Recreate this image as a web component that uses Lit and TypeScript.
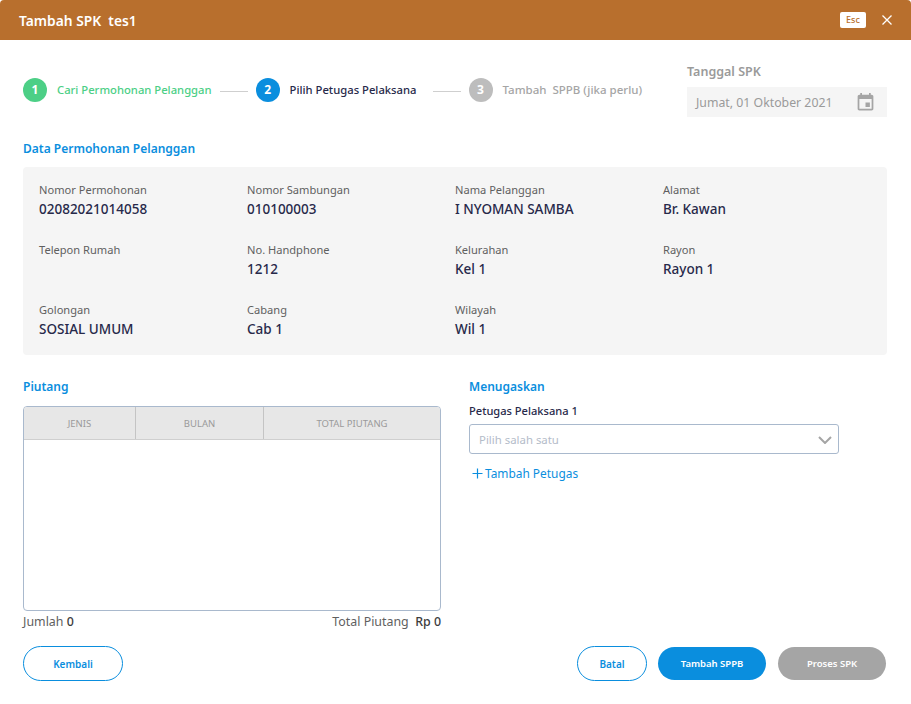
import { LitElement, css, html } from 'lit';
import { customElement } from 'lit/decorators.js';

const fields = [
  ['Nomor Permohonan', '02082021014058'],
  ['Nomor Sambungan', '010100003'],
  ['Nama Pelanggan', 'I NYOMAN SAMBA'],
  ['Alamat', 'Br. Kawan'],
  ['Telepon Rumah', ''],
  ['No. Handphone', '1212'],
  ['Kelurahan', 'Kel 1'],
  ['Rayon', 'Rayon 1'],
  ['Golongan', 'SOSIAL UMUM'],
  ['Cabang', 'Cab 1'],
  ['Wilayah', 'Wil 1'],
];

@customElement('app-root')
export class AppRoot extends LitElement {
  static styles = css`
    :host {
      display: block;
      width: 911px;
      height: 704px;
      overflow: hidden;
      background: #fff;
      font-family: 'Noto Sans', sans-serif;
      color: #27294a;
    }

    .modal {
      height: 704px;
      display: flex;
      flex-direction: column;
    }

    .header {
      height: 40px;
      flex: none;
      box-sizing: border-box;
      padding: 0 19px;
      display: flex;
      align-items: center;
      background: #b86f2d;
      border-radius: 4px 4px 0 0;
      color: #fff;
    }

    .title {
      flex: 1;
      font-size: 13.8px;
      font-weight: 600;
      white-space: pre;
    }

    .esc {
      width: 26px;
      height: 16px;
      margin-right: 16px;
      border-radius: 2px;
      background: #fff;
      color: #b86f2d;
      font-size: 9px;
      font-weight: 500;
      line-height: 16px;
      text-align: center;
    }

    .close {
      display: block;
      width: 10px;
      height: 10px;
    }

    .body {
      flex: 1;
      padding: 0 24px 0 23px;
      display: flex;
      flex-direction: column;
    }

    .top {
      height: 99px;
      flex: none;
      display: flex;
      justify-content: space-between;
    }

    .steps {
      display: flex;
      align-items: center;
      height: 24px;
      margin-top: 38px;
      font-size: 11.26px;
      font-weight: 500;
    }

    .circle {
      width: 24px;
      height: 24px;
      border-radius: 50%;
      color: #fff;
      font-size: 12px;
      font-weight: 700;
      line-height: 24px;
      text-align: center;
      margin-right: 10px;
    }

    .step {
      white-space: pre;
      margin-top: -2px;
    }

    .done .circle { background: #4ccf86; }
    .done .step { color: #4ccf86; }
    .active .circle { background: #0a8ede; }
    .active .step { color: #27294a; }
    .idle .circle { background: #bdbdbd; }
    .idle .step { color: #a5a5a5; font-size: 11.5px; }

    .state {
      display: flex;
      align-items: center;
    }

    .line {
      height: 1px;
      width: 28px;
      margin: 2px 8px 0;
      background: #cfcfcf;
    }

    .active + .line {
      margin-left: 16px;
    }

    .date {
      width: 200px;
      padding-top: 23px;
    }

    .date-label {
      font-size: 12.5px;
      font-weight: 600;
      line-height: 17px;
      color: #9a9a9a;
    }

    .date-box {
      height: 30px;
      margin-top: 7px;
      padding: 0 11px 0 9px;
      display: flex;
      align-items: center;
      justify-content: space-between;
      background: #f5f5f5;
      color: #9a9a9a;
      font-size: 12.3px;
    }

    .section {
      color: #0a8ede;
      font-size: 12px;
      font-weight: 600;
      line-height: 20px;
    }

    .card {
      height: 188px;
      flex: none;
      box-sizing: border-box;
      margin-top: 8px;
      padding: 13px 16px 0;
      display: grid;
      grid-template-columns: repeat(4, 208px);
      grid-auto-rows: 60px;
      background: #f5f5f5;
      border-radius: 4px;
    }

    .field-label {
      font-size: 11.1px;
      line-height: 19px;
      color: #5f5f5f;
    }

    .field-value {
      font-size: 13.5px;
      font-weight: 500;
      line-height: 20px;
    }

    .columns {
      display: flex;
      gap: 28px;
      margin-top: 22px;
    }

    .left {
      width: 418px;
    }

    .right {
      width: 370px;
    }

    .table {
      height: 205px;
      box-sizing: border-box;
      margin-top: 9px;
      border: 1px solid #a9b9cd;
      border-radius: 4px;
      overflow: hidden;
    }

    .thead {
      height: 33px;
      box-sizing: border-box;
      display: grid;
      grid-template-columns: 112px 128px 1fr;
      background: #e7e7e7;
      border-bottom: 1px solid #cfcfcf;
    }

    .thead div {
      display: flex;
      align-items: center;
      justify-content: center;
      color: #9a9a9a;
      font-size: 9.5px;
      border-right: 1px solid #c4c4c4;
    }

    .thead div:last-child {
      border-right: 0;
    }

    .totals {
      display: flex;
      justify-content: space-between;
      margin-top: 2px;
      font-size: 12.4px;
      line-height: 18px;
      color: #5f5f5f;
      white-space: pre;
    }

    .totals b {
      font-weight: 500;
      color: #3c3c3c;
    }

    .agent-label {
      margin-top: 6px;
      font-size: 11.1px;
      font-weight: 500;
      line-height: 16px;
    }

    .select {
      height: 30px;
      box-sizing: border-box;
      margin-top: 5px;
      padding: 1px 6px 0 9px;
      display: flex;
      align-items: center;
      justify-content: space-between;
      border: 1px solid #a9b9cd;
      border-radius: 3px;
      color: #b4bcc9;
      font-size: 11.4px;
    }

    .add {
      display: flex;
      align-items: center;
      gap: 2px;
      margin-top: 11px;
      padding-left: 3px;
      color: #0a8ede;
      font-size: 11.9px;
      line-height: 17px;
    }

    .actions {
      display: flex;
      align-items: center;
      gap: 11px;
      margin-top: 15px;
      padding-right: 1px;
    }

    .spacer {
      flex: 1;
    }

    button {
      box-sizing: border-box;
      border-radius: 18px;
      font-family: inherit;
      font-size: 9.5px;
      font-weight: 600;
      padding: 0;
    }

    button.outline {
      height: 35px;
      background: #fff;
      border: 1px solid #0a8ede;
      color: #0a8ede;
      font-size: 10px;
    }

    button.solid {
      width: 108px;
      height: 33px;
      border: 0;
      color: #fff;
    }

    .primary { background: #0a8ede; }
    .muted { background: #a5a5a5; margin-left: 1px; }
    .back { width: 100px; }
    .cancel { width: 70px; }
  `;

  render() {
    return html`
      <div class="modal">
        <header class="header">
          <div class="title">Tambah SPK  tes1</div>
          <div class="esc">Esc</div>
          <svg class="close" viewBox="0 0 10 10" fill="none" stroke="#fff" stroke-width="1.3">
            <path d="M.5.5l9 9M9.5.5l-9 9" />
          </svg>
        </header>
        <main class="body">
          <div class="top">
            <div class="steps">
              <div class="state done"><div class="circle">1</div><div class="step">Cari Permohonan Pelanggan</div></div>
              <div class="line"></div>
              <div class="state active"><div class="circle">2</div><div class="step">Pilih Petugas Pelaksana</div></div>
              <div class="line"></div>
              <div class="state idle"><div class="circle">3</div><div class="step">Tambah  SPPB (jika perlu)</div></div>
            </div>
            <div class="date">
              <div class="date-label">Tanggal SPK</div>
              <div class="date-box">
                <span>Jumat, 01 Oktober 2021</span>
                <svg width="21" height="21" viewBox="0 0 24 24" fill="#a5a5a5">
                  <path d="M17 12h-5v5h5v-5zM16 1v2H8V1H6v2H5c-1.11 0-1.99.9-1.99 2L3 19c0 1.1.89 2 2 2h14c1.1 0 2-.9 2-2V5c0-1.1-.9-2-2-2h-1V1h-2zm3 18H5V8h14v11z" />
                </svg>
              </div>
            </div>
          </div>
          <div class="section">Data Permohonan Pelanggan</div>
          <div class="card">
            ${fields.map(
              ([label, value]) => html`
                <div>
                  <div class="field-label">${label}</div>
                  <div class="field-value">${value}</div>
                </div>
              `
            )}
          </div>
          <div class="columns">
            <div class="left">
              <div class="section">Piutang</div>
              <div class="table">
                <div class="thead">
                  <div>JENIS</div>
                  <div>BULAN</div>
                  <div>TOTAL PIUTANG</div>
                </div>
              </div>
              <div class="totals">
                <span>Jumlah <b>0</b></span>
                <span>Total Piutang  <b>Rp 0</b></span>
              </div>
            </div>
            <div class="right">
              <div class="section">Menugaskan</div>
              <div class="agent-label">Petugas Pelaksana 1</div>
              <div class="select">
                <span>Pilih salah satu</span>
                <svg width="14" height="8" viewBox="0 0 14 8" fill="none" stroke="#a5a5a5" stroke-width="2">
                  <path d="M1 1l6 6 6-6" />
                </svg>
              </div>
              <div class="add">
                <svg width="11" height="11" viewBox="0 0 11 11" fill="none" stroke="#0a8ede" stroke-width="1.2">
                  <path d="M5.5.5v10M.5 5.5h10" />
                </svg>
                <span>Tambah Petugas</span>
              </div>
            </div>
          </div>
          <div class="actions">
            <button class="outline back">Kembali</button>
            <div class="spacer"></div>
            <button class="outline cancel">Batal</button>
            <button class="solid primary">Tambah SPPB</button>
            <button class="solid muted">Proses SPK</button>
          </div>
        </main>
      </div>
    `;
  }
}
